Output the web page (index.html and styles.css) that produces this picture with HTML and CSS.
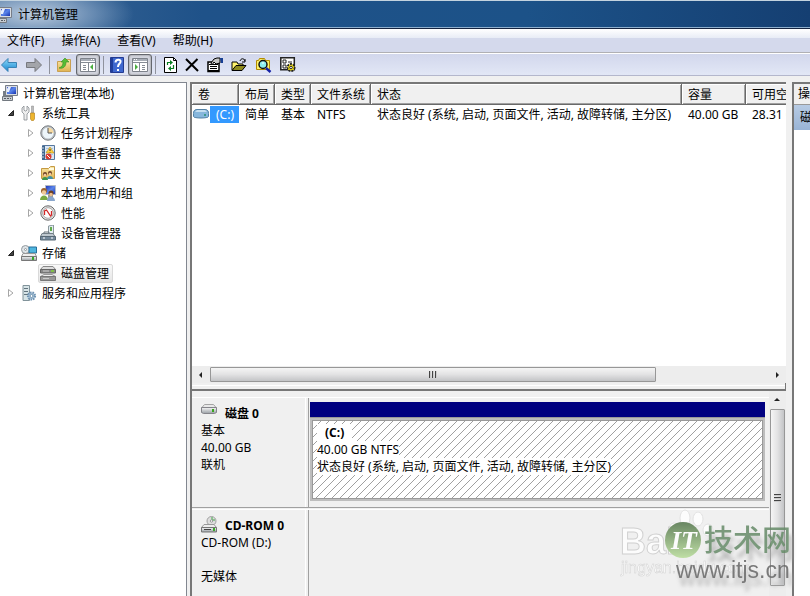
FILE: index.html
```html
<!DOCTYPE html>
<html lang="zh-CN">
<head>
<meta charset="utf-8">
<title>计算机管理</title>
<link rel="stylesheet" href="styles.css">
</head>
<body>
<svg class="defs" aria-hidden="true">
  <defs>
    <linearGradient id="blueArrow" x1="0" y1="0" x2="0" y2="1"><stop offset="0" stop-color="#8fdcfa"/><stop offset="1" stop-color="#1583cf"/></linearGradient>
    <linearGradient id="screen" x1="0" y1="0" x2="1" y2="1"><stop offset="0" stop-color="#1a2fb4"/><stop offset=".5" stop-color="#5b86ea"/><stop offset="1" stop-color="#1632b0"/></linearGradient>
    <linearGradient id="metal" x1="0" y1="0" x2="0" y2="1"><stop offset="0" stop-color="#f6f6f6"/><stop offset="1" stop-color="#999fa5"/></linearGradient>
    <linearGradient id="folder" x1="0" y1="0" x2="0" y2="1"><stop offset="0" stop-color="#fae9a9"/><stop offset="1" stop-color="#e0b352"/></linearGradient>
    <linearGradient id="green" x1="0" y1="0" x2="0" y2="1"><stop offset="0" stop-color="#51744a"/><stop offset="1" stop-color="#b7dc98"/></linearGradient>
    <pattern id="hatch" width="8" height="8" patternUnits="userSpaceOnUse"><path fill="#a0a0a0" shape-rendering="crispEdges" d="M0 7h1v1H0zM1 6h1v1H1zM2 5h1v1H2zM3 4h1v1H3zM4 3h1v1H4zM5 2h1v1H5zM6 1h1v1H6zM7 0h1v1H7z"/></pattern>
    <symbol id="computer" viewBox="0 0 16 16"><path fill="#d8dce2" stroke="#777d88" d="M3.500.5h12v10h-12z"/><path fill="url(#screen)" d="M5 2h9v7H5z"/><path fill="#e6efff" d="M6 2h3L7 7H5V4z"/><path fill="#777e87" d="M8 11h3v2H8zM1 6h3v6H1z"/><path fill="#c8ccd1" stroke="#737980" d="M.5 11.500h10v4H.5z"/><path stroke="#555c65" d="M2 13.500h2M5 13.500h2M8 13.500h1"/></symbol>
    <symbol id="closed" viewBox="0 0 8 10"><path d="M1.500 1.500v7L6 5z" fill="#fff" stroke="#a6a6a6"/></symbol>
    <symbol id="open" viewBox="0 0 8 10"><path d="M6.500 2.500v5h-5z" fill="#444" stroke="#222"/></symbol>
    <symbol id="panel" viewBox="0 0 16 14"><path fill="#fff" stroke="#7e838b" d="M.5.500h15v13H.5z"/><path fill="#a7adb6" d="M1 1h14v2H1z"/><path stroke="#858b94" d="M1 4.500h14M8.500 5v8M3 7.500h3M3 9.500h3M3 11.500h3"/><path fill="#fff" d="M11 1h1v1h-1zM13 1h1v1h-1z"/><path fill="#4aae3f" d="M13 6v6L10 9z"/></symbol>
    <symbol id="drive" viewBox="0 0 16 11"><path fill="#e9e9e9" stroke="#a4a4a4" d="M3.500.5h9l3 3.500H.5z"/><path fill="url(#metal)" stroke="#85858b" d="M.5 3.500h15v5l-2 1h-11l-2-1z"/><path fill="#38a51e" d="M11 5h2v3h-2z"/></symbol>
  </defs>
</svg>

<header class="titlebar">
  <svg class="title-icon" width="16" height="16"><use href="#computer"/></svg>
  <h1>计算机管理</h1>
</header>

<nav class="menubar">
  <button>文件(F)</button><button>操作(A)</button><button>查看(V)</button><button>帮助(H)</button>
</nav>

<div class="toolbar">
  <button aria-label="后退"><svg width="18" height="16" viewBox="0 0 18 16"><path d="M1.500 8L8 1.500v4h8.500v5H8v4z" fill="url(#blueArrow)" stroke="#3a83b5"/></svg></button>
  <button aria-label="前进"><svg width="18" height="16" viewBox="0 0 18 16"><path d="M16.500 8L10 1.500v4H1.500v5H10v4z" fill="#a3a5aa" stroke="#77797e"/></svg></button>
  <i class="sep"></i>
  <button aria-label="向上一级"><svg width="16" height="16" viewBox="0 0 16 16"><path d="M1.500 4.500h5l2-2h6v12h-13z" fill="url(#folder)" stroke="#c9a052"/><path d="M3 11c3-1 4-3 4-6H5l4-4 4 4h-3c0 5-3 7-7 6z" fill="#57bd35" stroke="#398d25" stroke-width=".6"/></svg></button>
  <button class="pressed" aria-label="显示控制台树"><svg width="16" height="14"><use href="#panel"/></svg></button>
  <i class="sep"></i>
  <button aria-label="帮助"><svg width="14" height="16" viewBox="0 0 14 16"><path fill="#3f68cf" stroke="#243b91" d="M.5.500h13v15H.5z"/><path fill="#203e9b" d="M1 1h2v14H1z"/><path d="M5.500 5.500c0-4 6-3.500 5-.5C10 7 8 7 8 10" stroke="#fff" stroke-width="2" fill="none"/><path fill="#fff" d="M7 12h2v2H7z"/></svg></button>
  <button class="pressed" aria-label="显示操作窗格"><svg class="flip" width="16" height="14"><use href="#panel"/></svg></button>
  <i class="sep"></i>
  <div class="tools">
  <button aria-label="刷新"><svg width="13" height="16" viewBox="0 0 13 16"><path fill="#fff" stroke="#000" d="M.5.500h9l3 3v12H.5z"/><path d="M9.500.5v3h3" fill="none" stroke="#000"/><path d="M3.500 8V5.500H7M9.500 8v3.500H6" fill="none" stroke="#087f22" stroke-width="1.200"/><path fill="#087f22" d="M6 3v5l3-2.500zM7 9v5l-3-2.500z"/></svg></button>
  <button aria-label="删除"><svg width="14" height="14" viewBox="0 0 14 14"><path d="M1 1l12 12M12.500 1L1 12.500" stroke="#000" stroke-width="2"/></svg></button>
  <button aria-label="属性"><svg width="16" height="16" viewBox="0 0 16 16"><path fill="#fff" stroke="#000" stroke-width="1.500" d="M1 5h11v9.500H1z"/><path d="M2 7.500h9M3 9.500h7M3 11.500h7M1 13.500h11" stroke="#000"/><path d="M4 6l3-4 3-1h3v5l-4 1-2-2-2 3z" fill="#c8c8c8" stroke="#000"/><path fill="#173f94" d="M13 1h3v5h-2z"/></svg></button>
  <button aria-label="打开"><svg width="17" height="16" viewBox="0 0 17 16"><path d="M1 13V5h5l1 2h5v3" fill="#fff36b" stroke="#000"/><path d="M1 13.500l4-5h10l-4 5z" fill="#8f8b1c" stroke="#000"/><path d="M9 4c1-3 4-3 5 0m0 1V2m0 3h-3" fill="none" stroke="#000"/></svg></button>
  <button aria-label="查找"><svg width="16" height="16" viewBox="0 0 16 16"><path d="M.5 3.500h2l1-2h5l1 2h4v9H.5z" fill="#fdf36a" stroke="#b48b00"/><circle cx="7" cy="7.500" r="4" fill="#8beef0" stroke="#111" stroke-width="1.500"/><path d="M6 6h2" stroke="#fff"/><path d="M10 11l4.500 4" stroke="#1420a6" stroke-width="2.500"/></svg></button>
  <button aria-label="设置"><svg width="16" height="16" viewBox="0 0 16 16"><path d="M.8.800h13.500v12H.8z" fill="#fff" stroke="#222" stroke-width="1.500"/><path d="M3 3h3v3H3zM3 8h3v3H3zM8 5h4" fill="none" stroke="#222"/><circle cx="11" cy="10.500" r="3.500" fill="#f5e31a" stroke="#222" stroke-dasharray="2 1" stroke-width="2"/><circle cx="11" cy="10.500" r="2.500" fill="#f5e31a"/><circle cx="11" cy="10.500" r="1.300" fill="#fff" stroke="#222"/></svg></button>
  </div>
</div>

<main class="workspace">
  <aside class="tree">
    <ul>
      <li class="node root"><svg width="16" height="16"><use href="#computer"/></svg><span>计算机管理(本地)</span></li>
      <li class="node l1"><svg class="twisty" width="8" height="10"><use href="#open"/></svg><svg width="16" height="16" viewBox="0 0 16 16"><path d="M3 1v4l1 1h1l1-1V1l2 2v4L6 9v6H3V9L1 7V3z" fill="#eee" stroke="#858b90" stroke-width=".8"/><path d="M10.500 1h2v7h-2z" fill="#bbb" stroke="#888" stroke-width=".5"/><path d="M9.500 8h4v6l-1 1.500h-2l-1-1.500z" fill="#eeb52e" stroke="#b07b10" stroke-width=".6"/></svg><span>系统工具</span></li>
      <li class="node l2"><svg class="twisty" width="8" height="10"><use href="#closed"/></svg><svg width="16" height="16" viewBox="0 0 16 16"><circle cx="8" cy="8" r="7.200" fill="#bbc0c5" stroke="#777c80"/><circle cx="8" cy="8" r="5.500" fill="#edf6fb"/><path d="M8 8V2.500A5.500 5.500 0 0 1 13.500 8z" fill="#f5d8a0"/><path d="M8 3v5h4" fill="none" stroke="#555"/></svg><span>任务计划程序</span></li>
      <li class="node l2"><svg class="twisty" width="8" height="10"><use href="#closed"/></svg><svg width="16" height="16" viewBox="0 0 16 16"><path fill="#dce7f4" stroke="#56779d" d="M2.500.500h12v14h-12z"/><path fill="#3f6690" d="M2 1h3v14H2z"/><path stroke="#aac4df" d="M6 3.500h7M6 6.500h7M6 9.500h7"/><path d="M1 3h3M1 6h3M1 9h3M1 12h3" stroke="#d2dae2"/><path fill="#ffd03d" stroke="#bc8d18" stroke-width=".6" d="M10 2l4 6H6z"/><path d="M10 4v2M10 7v.5" stroke="#333"/><circle cx="8.500" cy="11.500" r="3" fill="#db3b2f"/><path stroke="#fff" d="M7 10l3 3"/></svg><span>事件查看器</span></li>
      <li class="node l2"><svg class="twisty" width="8" height="10"><use href="#closed"/></svg><svg width="16" height="16" viewBox="0 0 16 16"><path d="M1.500 3.500h7l2-2h4v12h-13z" fill="url(#folder)" stroke="#c59a43"/><path fill="#fffbe0" d="M9 3h5v2H9z"/><path fill="#3d944c" d="M2 15c0-4 6-4 6 0z"/><path fill="#3f91a5" d="M7 14c0-4 6-4 6 0z"/><circle cx="5" cy="9" r="2" fill="#6e4428"/><circle cx="10" cy="8" r="2" fill="#6e4428"/><circle cx="5" cy="10" r="1.300" fill="#f1c99f"/><circle cx="10" cy="9" r="1.300" fill="#f1c99f"/></svg><span>共享文件夹</span></li>
      <li class="node l2"><svg class="twisty" width="8" height="10"><use href="#closed"/></svg><svg width="16" height="16" viewBox="0 0 16 16"><path d="M5.500.500h10v9h-10z" fill="url(#screen)" stroke="#b4bbc7"/><path d="M8 10h5v3H8z" fill="#999"/><path fill="#79a942" d="M0 15c0-6 8-6 8 0z"/><path fill="#8aa6cc" d="M7 16c0-6 8-6 8 0z"/><circle cx="4" cy="6" r="3" fill="#9b632d"/><circle cx="4" cy="7.500" r="2.200" fill="#efc998"/><circle cx="11" cy="8" r="2.500" fill="#6e4023"/><circle cx="11" cy="9.500" r="1.800" fill="#edbe8b"/></svg><span>本地用户和组</span></li>
      <li class="node l2"><svg class="twisty" width="8" height="10"><use href="#closed"/></svg><svg width="16" height="16" viewBox="0 0 16 16"><circle cx="8" cy="8" r="7.200" fill="#e3e3e3" stroke="#6c6c6c"/><circle cx="8" cy="8" r="5.300" fill="#fff" stroke="#aaa"/><path d="M4.500 10V6l2-1 4 6 1-1V6" fill="none" stroke="#d22727" stroke-width="1.300"/></svg><span>性能</span></li>
      <li class="node l2"><i class="twisty"></i><svg width="16" height="16" viewBox="0 0 16 16"><path d="M8.500 1l5-1v9h-5z" fill="#e3eef1" stroke="#8b989e"/><path d="M10 2h2v4h-2z" fill="#61aa49"/><path d="M4 7h5v3H4z" fill="none" stroke="#657179"/><path d="M2 8.500h11l2 3H.5z" fill="#bdc7ce" stroke="#737f87"/><path d="M.5 11.500h15v3.500H.5z" fill="#74899c" stroke="#576875"/><path d="M3 13h2M11 13h2" stroke="#fff"/></svg><span>设备管理器</span></li>
      <li class="node l1"><svg class="twisty" width="8" height="10"><use href="#open"/></svg><svg width="16" height="16" viewBox="0 0 16 16"><circle cx="4.500" cy="4.500" r="4" fill="#dfe4e7" stroke="#92999e"/><circle cx="4.500" cy="4.500" r="1" fill="#fff" stroke="#92999e"/><path d="M8 2h7.500v6H8z" fill="#4fb6df" stroke="#276f9b"/><path d="M2 8.500h12l1.500 3H.5z" fill="#eee" stroke="#999"/><path d="M.5 11.500h15v4H.5z" fill="url(#metal)" stroke="#777"/><path fill="#37a92b" d="M11 12h2v3h-2z"/></svg><span>存储</span></li>
      <li class="node l2 selected"><i class="twisty"></i><span class="pick"><svg width="16" height="16" viewBox="0 0 16 16"><path d="M3 1.500h10l2.500 3H.5z" fill="#ddd" stroke="#888"/><path d="M.5 4.500h15V8H.5z" fill="#888" stroke="#666"/><path d="M4 9.500h8l3.500 2H.5z" fill="#eee" stroke="#999"/><path d="M.5 11.500h15v4H.5z" fill="#999" stroke="#777"/><path fill="#80c048" d="M11 5h3v2h-3z"/><path stroke="#ccc" d="M3 6h6M3 13.500h6"/></svg><span>磁盘管理</span></span></li>
      <li class="node l1"><svg class="twisty" width="8" height="10"><use href="#closed"/></svg><svg width="16" height="16" viewBox="0 0 16 16"><path d="M2 .500h6.500v15H2z" fill="#d7e4e7" stroke="#81939a"/><path d="M3 3.500h4M3 6.500h4M3 9.500h4" stroke="#61737d"/><circle cx="10.500" cy="11" r="3.600" fill="#a9c3da" stroke="#6f93b1" stroke-width="2" stroke-dasharray="1.500 1"/><circle cx="10.500" cy="11" r="1.500" fill="#fff" stroke="#7194ad"/></svg><span>服务和应用程序</span></li>
    </ul>
  </aside>

  <section class="center">
    <div class="volumes">
      <div class="table-wrap">
        <table>
          <colgroup><col class="c1"><col class="c2"><col class="c2"><col class="c3"><col class="c4"><col class="c5"><col class="c6"></colgroup>
          <thead><tr><th>卷</th><th>布局</th><th>类型</th><th>文件系统</th><th>状态</th><th>容量</th><th>可用空间</th></tr></thead>
          <tbody><tr><td class="volume"><div><svg width="16" height="10" viewBox="0 0 16 10"><path d="M4 .5h8c3 0 3.500 2 3.500 4v3c0 2-15 2-15 0v-3c0-2 .5-4 3.500-4z" fill="#86b6dc" stroke="#5281a5"/><path d="M4 1h8l2 2H2z" fill="#c5def0"/><path fill="#3b9b8b" d="M11 5h2v2h-2z"/></svg><b>(C:)</b></div></td><td>简单</td><td>基本</td><td>NTFS</td><td>状态良好 (系统, 启动, 页面文件, 活动, 故障转储, 主分区)</td><td>40.00 GB</td><td>28.31 GB</td></tr></tbody>
        </table>
      </div>
      <div class="hscroll">
        <svg width="18" height="16" viewBox="0 0 18 16"><path d="M10 5v6L7 8z" fill="#222"/></svg>
        <div class="htrack"><div class="hthumb"><i></i><i></i><i></i></div></div>
        <svg width="18" height="16" viewBox="0 0 18 16"><path d="M8 5v6l3-3z" fill="#222"/></svg>
      </div>
    </div>
    <div class="splitter"></div>
    <div class="lower">
      <div class="disks">
        <article class="disk">
          <div class="label"><h2><svg width="16" height="11"><use href="#drive"/></svg>磁盘 0</h2><p>基本</p><p>40.00 GB</p><p>联机</p></div>
          <div class="parts"><div class="bar"></div><div class="frame"><div class="partition"><svg class="fill" width="100%" height="100%"><rect width="100%" height="100%" fill="url(#hatch)"/></svg><p class="name">(C:)</p><p>40.00 GB NTFS</p><p>状态良好 (系统, 启动, 页面文件, 活动, 故障转储, 主分区)</p></div></div></div>
        </article>
        <article class="disk cd">
          <div class="label"><h2><svg width="16" height="17" viewBox="0 0 16 17"><circle cx="10.500" cy="5" r="4.500" fill="#dedede" stroke="#a0a0a0"/><path d="M11 1v3h3" stroke="#74ba79" stroke-width="1.500" fill="none"/><circle cx="10.500" cy="5" r="1.200" fill="#fff" stroke="#999"/><path d="M3 8.500h10l2.500 3H.5z" fill="#eee" stroke="#999"/><path d="M.5 11.500h15V16H.5z" fill="url(#metal)" stroke="#777"/><path d="M3 13.500h7" stroke="#444"/><path fill="#39a92b" d="M12 12h2v3h-2z"/></svg>CD-ROM 0</h2><p>CD-ROM (D:)</p><p class="blank"></p><p>无媒体</p></div>
          <div class="parts"></div>
        </article>
      </div>
      <div class="vscroll">
        <svg width="16" height="16" viewBox="0 0 16 16"><path d="M5 10h6L8 7z" fill="#222"/></svg>
        <div class="vthumb"><i></i><i></i><i></i></div>
      </div>
    </div>
  </section>

  <aside class="actions"><h2>操作</h2><p>磁盘管理</p></aside>
</main>

<svg class="watermark" width="190" height="92" viewBox="0 0 190 92" aria-hidden="true">
  <g fill="#fff" stroke="#ddd" opacity=".9"><ellipse cx="65" cy="14" rx="5" ry="8"/><ellipse cx="78" cy="15" rx="5" ry="7"/><ellipse cx="54" cy="25" rx="5" ry="6"/><ellipse cx="88" cy="26" rx="5" ry="6"/></g>
  <text class="wm-bai" x="0" y="50">Bai</text>
  <text class="wm-sub" x="1" y="69">jingyan.baidu.com</text>
  <circle cx="63" cy="36" r="18" fill="url(#green)"/>
  <text class="wm-it" x="51" y="45">IT</text>
  <text class="wm-name" x="84" y="47">技术网</text>
  <text class="wm-url" x="56" y="74">www.itjs.cn</text>
</svg>
</body>
</html>
```
FILE: styles.css
```css
* { box-sizing: border-box; }
body {
  margin: 0;
  height: 100vh;
  display: flex;
  flex-direction: column;
  overflow: hidden;
  background: #f0f0f0;
  color: #000;
  font: 12px/17px "Noto Sans", "Noto Sans CJK SC", sans-serif;
}
h1, h2, p, ul { margin: 0; padding: 0; font-size: 12px; font-weight: normal; }
svg { display: block; flex: none; }
button { border: 0; padding: 0; background: none; color: inherit; font: inherit; }
.defs { position: absolute; width: 0; height: 0; }

.titlebar {
  flex: none;
  height: 29px;
  display: flex;
  align-items: center;
  overflow: hidden;
  border-top: 1px solid #c3d3df;
  border-bottom: 1px solid #14233f;
  box-shadow: inset 0 -1px #8fb0cf;
  background:
    radial-gradient(ellipse 100px 34px at 34px 13px, rgba(200, 214, 230, .9), rgba(140, 168, 200, .6) 60%, transparent),
    linear-gradient(90deg, #3c6796, #1f5289 25%, #1c5288 65%, #153f72);
}
.title-icon { margin-left: -4px; margin-right: 6px; }

.menubar {
  flex: none;
  height: 24px;
  display: flex;
  gap: 17px;
  padding-left: 7px;
  border-bottom: 1px solid #b0b0b4;
  background: linear-gradient(#fff, #e8ecf6 9px, #d4d9ec 9px);
}
.toolbar {
  flex: none;
  height: 23px;
  display: flex;
  align-items: center;
  gap: 7px;
  border-top: 1px solid #fff;
  border-bottom: 1px solid #b4b7cc;
  background: linear-gradient(#d2d7ec, #e2e7f6);
}
.sep { width: 1px; height: 18px; margin: 0 -1px; background: #8f929d; }
.tools { display: flex; align-items: center; gap: 8px; margin-left: 2px; }
.toolbar .pressed { padding: 3px; border: 1px solid #64676e; border-radius: 3px; background: #d3d5de; box-shadow: inset 0 0 2px #777; margin: 0 -3px; }
.flip { transform: scaleX(-1); }

.workspace {
  flex: 1;
  min-height: 0;
  margin-top: 6px;
  display: grid;
  grid-template-columns: 187px minmax(0, 1fr) 18px;
}
.tree { border-top: 1px solid #828790; border-right: 1px solid #828790; background: #fff; }
.tree ul { list-style: none; }
.node { height: 20px; display: flex; align-items: center; gap: 5px; white-space: nowrap; }
.node .twisty { width: 8px; }
.root { padding-left: 2px; }
.l1 { padding-left: 7px; gap: 6px; }
.l1 > svg + svg { margin-right: -1px; }
.l2 { padding-left: 27px; gap: 5px; }
.pick { display: flex; align-items: center; gap: 5px; height: 19px; margin-left: -2px; padding: 0 3px 0 1px; border: 1px solid #d9d9d9; border-radius: 2px; background: linear-gradient(#f9f9f9, #e6e6e6); }

.center { margin: 0 6px 0 3px; min-width: 0; display: grid; grid-template-columns: minmax(0, 1fr); grid-template-rows: minmax(0, 1fr) 8px 205px; border-left: 2px solid #777; }
.volumes { display: flex; flex-direction: column; min-height: 0; border-top: 2px solid #777; background: #fff; }
.table-wrap { flex: 1; min-height: 0; overflow: hidden; }
table { width: 628px; table-layout: fixed; border-collapse: separate; border-spacing: 0; white-space: nowrap; }
.c1 { width: 47px; } .c2 { width: 36px; } .c3 { width: 60px; } .c4 { width: 311px; } .c5 { width: 64px; } .c6 { width: 74px; }
th { height: 21px; padding: 0 0 0 6px; text-align: left; font-weight: normal; background: #f0f0f0; border-right: 1px solid #696969; border-bottom: 1px solid #696969; box-shadow: inset 1px 1px #fff, inset -1px -1px #a0a0a0; }
td { height: 18px; padding: 0 0 0 6px; }
td.volume { padding: 0; }
.volume div { display: flex; align-items: center; gap: 1px; height: 18px; padding-left: 1px; }
.volume b { flex: 1; padding-left: 6px; background: #3399ff; color: #fff; font-weight: normal; }
.hscroll { flex: none; height: 17px; display: flex; align-items: center; background: #ededed; }
.htrack { flex: 1; }
.hthumb { width: 80%; height: 15px; display: flex; justify-content: center; align-items: center; gap: 1px; border: 1px solid #979797; border-radius: 1px; background: linear-gradient(#f5f5f5, #e2e2e3 50%, #c3c4c6); }
.hthumb i { width: 2px; height: 7px; border-left: 1px solid #444; border-right: 1px solid #ccc; }
.splitter { background: linear-gradient(#f0f0f0 2px, #fff 2px, #fff 3px, #f0f0f0 3px); border-bottom: 2px solid #777; border-right: 1px solid #777; }
.lower { min-height: 0; display: flex; overflow: hidden; }
.disks { flex: 1; min-width: 0; padding-top: 6px; }
.disk { height: 111px; display: flex; border-top: 1px solid #fff; border-bottom: 1px solid #a0a0a0; }
.label { flex: none; width: 117px; padding: 7px 0 0 9px; border-right: 1px solid #a0a0a0; box-shadow: inset -2px 0 #f0f0f0, inset -3px 0 #fff; }
.label h2 { display: flex; gap: 8px; font-weight: bold; height: 17px; }
.label h2 svg { margin-top: -1px; }
.blank { height: 17px; }
.parts { flex: 1; min-width: 0; padding: 4px 4px 0 1px; }
.bar { height: 16px; background: #000080; border-bottom: 1px solid #999; }
.frame { padding: 2px; background: #bdbdbd; }
.partition { position: relative; height: 79px; padding: 3px 4px; border: 1px solid #999; background: #fff; display: flex; flex-direction: column; align-items: flex-start; white-space: nowrap; overflow: hidden; }
.fill { position: absolute; inset: 0; }
.partition p { position: relative; background: #fff; }
.partition .name { font-weight: bold; padding: 0 8px; }
.cd { border-bottom: 0; margin-top: 1px; }
.vscroll { flex: none; width: 17px; background: #ededed; }
.vthumb { height: 177px; width: 15px; margin: 2px 1px; display: flex; flex-direction: column; align-items: center; justify-content: center; gap: 1px; border: 1px solid #979797; border-radius: 1px; background: linear-gradient(90deg, #f5f5f5, #e2e2e3 50%, #c3c4c6); }
.vthumb i { width: 7px; height: 2px; border-top: 1px solid #444; border-bottom: 1px solid #ccc; }

.actions { overflow: hidden; white-space: nowrap; border-left: 2px solid #777; border-top: 2px solid #777; background: #fff; }
.actions h2 { height: 21px; line-height: 20px; padding-left: 4px; background: #f0f0f0; border-bottom: 1px solid #999; }
.actions p { height: 25px; line-height: 25px; padding-left: 6px; background: linear-gradient(#b7cbe4, #99b4d6); }

.watermark { position: absolute; right: 0; bottom: 0; opacity: .85; overflow: visible; pointer-events: none; }
.wm-bai { font: bold 36px "Liberation Sans", sans-serif; fill: #fff; stroke: #ccc; }
.wm-sub { font: 16px "Liberation Sans", sans-serif; fill: #fff; stroke: #ccc; stroke-width: .5px; }
.wm-it { font: italic bold 26px "Liberation Serif", serif; fill: #fff; }
.wm-name, .wm-url { filter: drop-shadow(3px 8px 2px #aaa); }
.wm-name { font: 500 29px "Noto Sans CJK SC", sans-serif; fill: #668b68; }
.wm-url { font: 23px "Liberation Sans", sans-serif; fill: #666; }
```
